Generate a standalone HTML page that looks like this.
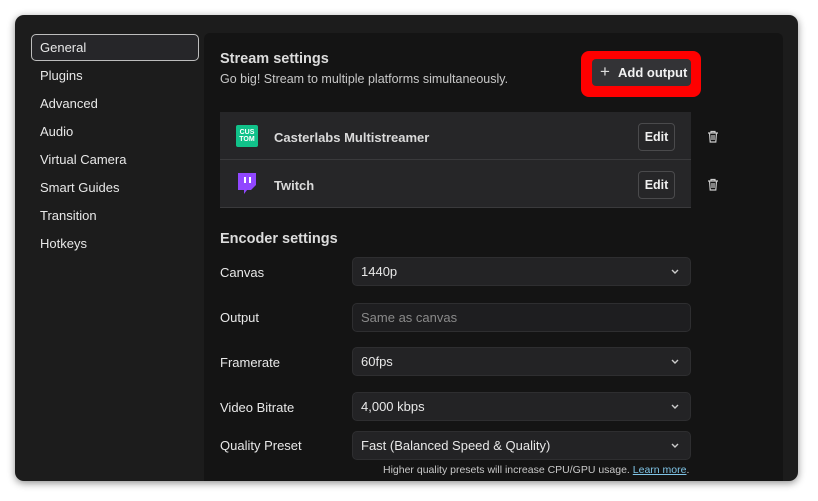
<!DOCTYPE html>
<html><head><style>
*{margin:0;padding:0;box-sizing:border-box}
body{width:818px;height:501px;background:#fff;font-family:"Liberation Sans",sans-serif;position:relative;overflow:hidden}
.win{position:absolute;left:15px;top:15px;width:783px;height:466px;background:#1c1c1c;border-radius:9px;box-shadow:0 2px 8px rgba(0,0,0,.45);overflow:hidden}
.side div{position:absolute;left:25px;font-size:13px;color:#e8e8e8}
.sel{position:absolute;left:16px;top:19px;width:168px;height:27px;border:1.5px solid #bdbdbd;border-radius:5px;background:#262629}
.panel{position:absolute;left:189px;top:18px;width:579px;height:460px;background:#141414;border-radius:6px 6px 0 0}
.t{position:absolute;color:#e8e8e8;font-size:13px}
.h{font-size:14.5px;font-weight:bold;color:#dcdcdc}
.sel2{position:absolute;left:337px;width:339px;height:29px;background:#232325;border:1px solid #2e2e30;border-radius:5px;color:#e8e8e8;font-size:13px;padding:6px 0 0 8px}
.sel2 svg{position:absolute;right:10px;top:10px}
.row{position:absolute;left:220px;width:471px;height:48px;background:#262628}
.edit{position:absolute;left:623px;width:37px;height:28px;border:1px solid #4a4a4c;border-radius:4px;color:#f0f0f0;font-size:12.5px;font-weight:bold;text-align:center;line-height:26px;background:#262628}
</style></head><body>
<div class="win">
<div class="sel"></div>
<div class="side">
<div style="top:25px">General</div><div style="top:53px">Plugins</div><div style="top:81px">Advanced</div><div style="top:109px">Audio</div><div style="top:137px">Virtual Camera</div><div style="top:165px">Smart Guides</div><div style="top:193px">Transition</div><div style="top:221px">Hotkeys</div>
</div>
<div class="panel"></div>
</div>
<div class="t h" style="left:220px;top:51px">Stream settings</div>
<div class="t" style="left:220px;top:72px;color:#c8c8c8;font-size:12.5px">Go big! Stream to multiple platforms simultaneously.</div>
<div style="position:absolute;left:581px;top:51px;width:120px;height:46px;background:#ff0000;border-radius:8px"></div>
<div style="position:absolute;left:592px;top:59px;width:99px;height:27px;background:#333336;border-radius:4px;color:#f2f2f2;font-size:13px;font-weight:bold;line-height:27px;padding-left:26px">Add output</div>
<div style="position:absolute;left:600px;top:65px;color:#ddd;font-size:17px;line-height:14px">+</div>
<div class="row" style="top:112px;border-bottom:1px solid #3a3a3c"></div>
<div class="row" style="top:160px;border-bottom:1px solid #3a3a3c"></div>
<div style="position:absolute;left:236px;top:125px;width:22px;height:22px;background:#11c28a;border-radius:2px;color:#fff;font-size:7px;font-weight:bold;line-height:7px;text-align:center;padding-top:4px">CUS<br>TOM</div>
<svg style="position:absolute;left:236px;top:172px" width="21" height="23" viewBox="0 0 21 23"><path d="M2 1h18v12l-5 5h-4l-3 4v-4H2z" fill="#9147ff"/><rect x="8" y="5" width="2" height="6" fill="#fff"/><rect x="13" y="5" width="2" height="6" fill="#fff"/></svg>
<div class="t" style="left:274px;top:130px;font-weight:bold;color:#dadada">Casterlabs Multistreamer</div>
<div class="t" style="left:274px;top:178px;font-weight:bold;color:#dadada">Twitch</div>
<div class="edit" style="top:123px;left:638px">Edit</div>
<div class="edit" style="top:171px;left:638px">Edit</div>
<svg style="position:absolute;left:707px;top:130px" width="12" height="13" viewBox="0 0 12 13" fill="none" stroke="#ccc" stroke-width="1.2"><path d="M1 3h10M4 3V1.5h4V3M2.5 3l.7 9h5.6l.7-9M5 5v5M7 5v5"/></svg>
<svg style="position:absolute;left:707px;top:178px" width="12" height="13" viewBox="0 0 12 13" fill="none" stroke="#ccc" stroke-width="1.2"><path d="M1 3h10M4 3V1.5h4V3M2.5 3l.7 9h5.6l.7-9M5 5v5M7 5v5"/></svg>
<div class="t h" style="left:220px;top:231px">Encoder settings</div>
<div class="t" style="left:220px;top:265px">Canvas</div>
<div class="t" style="left:220px;top:310px">Output</div>
<div class="t" style="left:220px;top:355px">Framerate</div>
<div class="t" style="left:220px;top:400px">Video Bitrate</div>
<div class="t" style="left:220px;top:438px">Quality Preset</div>
<div class="sel2" style="top:257px;left:352px">1440p<svg width="10" height="7"><path d="M2 2l3 3 3-3" stroke="#ccc" stroke-width="1.4" fill="none"/></svg></div>
<div class="sel2" style="top:303px;left:352px;color:#8a8a8a;background:#1e1e20">Same as canvas</div>
<div class="sel2" style="top:347px;left:352px">60fps<svg width="10" height="7"><path d="M2 2l3 3 3-3" stroke="#ccc" stroke-width="1.4" fill="none"/></svg></div>
<div class="sel2" style="top:392px;left:352px">4,000 kbps<svg width="10" height="7"><path d="M2 2l3 3 3-3" stroke="#ccc" stroke-width="1.4" fill="none"/></svg></div>
<div class="sel2" style="top:431px;left:352px">Fast (Balanced Speed &amp; Quality)<svg width="10" height="7"><path d="M2 2l3 3 3-3" stroke="#ccc" stroke-width="1.4" fill="none"/></svg></div>
<div class="t" style="left:383px;top:464px;font-size:10.5px;color:#c8c8c8">Higher quality presets will increase CPU/GPU usage. <span style="color:#7fc4e6;text-decoration:underline">Learn more</span>.</div>
</body></html>
